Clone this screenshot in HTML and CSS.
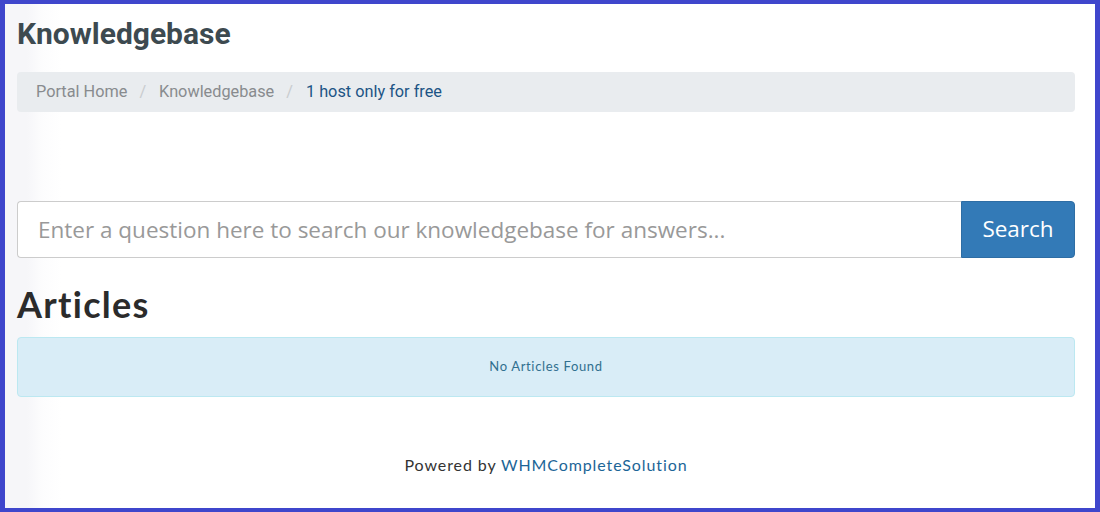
FILE: index.html
```html
<!DOCTYPE html>
<html>
<head>
<meta charset="utf-8">
<title>Knowledgebase</title>
<link rel="stylesheet" href="styles.css">
</head>
<body>
<div class="frame">
  <main class="page">
    <h1 class="page-title">Knowledgebase</h1>
    <nav class="breadcrumb">
      <a class="crumb" href="#">Portal Home</a>
      <span class="sep">/</span>
      <a class="crumb" href="#">Knowledgebase</a>
      <span class="sep">/</span>
      <span class="crumb active">1 host only for free</span>
    </nav>
    <form class="search">
      <input class="search-input" type="text" placeholder="Enter a question here to search our knowledgebase for answers...">
      <button class="search-btn" type="button">Search</button>
    </form>
    <h2 class="section-title">Articles</h2>
    <div class="alert">No Articles Found</div>
    <footer class="footer">Powered by <a href="#">WHMCompleteSolution</a></footer>
  </main>
</div>
</body>
</html>
```

FILE: styles.css
```css
* { box-sizing: border-box; }
html, body { margin: 0; padding: 0; }
body {
  width: 1100px;
  height: 512px;
  overflow: hidden;
  font-family: "Open Sans", sans-serif;
}
.frame {
  width: 1100px;
  height: 512px;
  border-style: solid;
  border-color: #3f46cc;
  border-width: 4px 5px 4px 5px;
  background: linear-gradient(to right, #f6f6f9 0, #f6f6f9 22px, #fcfcfd 36px, #ffffff 56px);
}
.page {
  padding: 0 20px 0 12px;
  display: flex;
  flex-direction: column;
}
.page-title {
  margin: 11px 0 0 0;
  font-family: Roboto, sans-serif;
  font-weight: 700;
  font-size: 30px;
  line-height: 37px;
  color: #3d4a50;
}
.breadcrumb {
  margin-top: 20px;
  height: 40px;
  background: #e9ecef;
  border-radius: 4px;
  display: flex;
  align-items: center;
  padding: 0 19px 2px 19px;
  font-family: Roboto, sans-serif;
  font-size: 16.3px;
}
.crumb { color: #888b8e; text-decoration: none; }
.crumb.active { color: #1c5485; }
.sep { color: #c8cbce; padding: 0 13px 0 12px; }
.search {
  margin: 89px 0 0 0;
  display: flex;
  height: 57px;
}
.search-input {
  flex: 1;
  height: 57px;
  border: 1px solid #cccccc;
  border-right: none;
  border-radius: 4px 0 0 4px;
  padding: 0 20px;
  font-family: "Open Sans", sans-serif;
  font-size: 22.5px;
  color: #555;
  background: #fff;
  outline: none;
}
.search-input::placeholder { color: #999999; }
.search-btn {
  width: 114px;
  height: 57px;
  border: 1px solid #2e6da4;
  border-radius: 0 4px 4px 0;
  background: #337ab7;
  color: #fff;
  font-family: "Open Sans", sans-serif;
  font-size: 22.5px;
  padding: 0 0 2px 0;
}
.section-title {
  margin: 24px 0 0 0;
  font-family: Lato, sans-serif;
  font-weight: 700;
  font-size: 36px;
  line-height: 44px;
  letter-spacing: 1.3px;
  color: #2b2b2b;
}
.alert {
  margin-top: 11px;
  height: 60px;
  background: #d9edf7;
  border: 1px solid #bce8f1;
  border-radius: 4px;
  color: #31708f;
  font-family: Lato, sans-serif;
  font-size: 13px;
  letter-spacing: 0.65px;
  display: flex;
  align-items: center;
  justify-content: center;
  padding-bottom: 3px;
}
.footer {
  margin-top: 58px;
  text-align: center;
  font-family: Lato, sans-serif;
  font-size: 16px;
  letter-spacing: 0.9px;
  color: #333;
}
.footer a { color: #1c6597; text-decoration: none; }
```
